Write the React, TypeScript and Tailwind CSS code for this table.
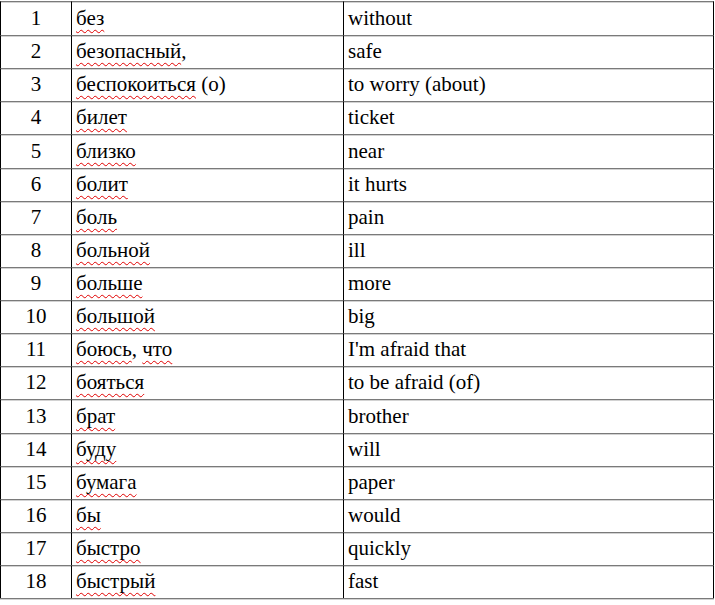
import React from "react";

type Row = { n: number; ru: React.ReactNode; en: string; tall?: boolean };

const W = ({ children }: { children: React.ReactNode }) => (
  <span className="underline decoration-wavy decoration-[#e00000] decoration-1 underline-offset-[4px] [text-decoration-skip-ink:none]">
    {children}
  </span>
);

const rows: Row[] = [
  { n: 1, ru: <W>без</W>, en: "without", tall: true },
  { n: 2, ru: <><W>безопасный</W>,</>, en: "safe" },
  { n: 3, ru: <><W>беспокоиться</W> (о)</>, en: "to worry (about)" },
  { n: 4, ru: <W>билет</W>, en: "ticket" },
  { n: 5, ru: <W>близко</W>, en: "near", tall: true },
  { n: 6, ru: <W>болит</W>, en: "it hurts" },
  { n: 7, ru: <W>боль</W>, en: "pain" },
  { n: 8, ru: <W>больной</W>, en: "ill" },
  { n: 9, ru: <W>больше</W>, en: "more" },
  { n: 10, ru: <W>большой</W>, en: "big" },
  { n: 11, ru: <><W>боюсь</W>, <W>что</W></>, en: "I'm afraid that" },
  { n: 12, ru: <W>бояться</W>, en: "to be afraid (of)" },
  { n: 13, ru: <W>брат</W>, en: "brother", tall: true },
  { n: 14, ru: <W>буду</W>, en: "will" },
  { n: 15, ru: <W>бумага</W>, en: "paper" },
  { n: 16, ru: <W>бы</W>, en: "would" },
  { n: 17, ru: <W>быстро</W>, en: "quickly" },
  { n: 18, ru: <W>быстрый</W>, en: "fast" },
];

const cell =
  "flex items-center border-l border-t border-l-black border-t-[#7a7a7a] shadow-[inset_0_1px_0_#d2d2d2]";

export default function App() {
  return (
    <div className="w-[715px] h-[605px] bg-white pt-[1px] font-['Liberation_Serif','Times_New_Roman',serif] text-[21px] text-black">
      <div className="flex flex-col w-[714px]">
        {rows.map((r) => (
          <div key={r.n} className={`flex ${r.tall ? "h-[34px]" : "h-[33px]"}`}>
            <div className={`${cell} w-[71px] justify-center`}>
              <span>{r.n}</span>
            </div>
            <div className={`${cell} w-[272px] pl-[4px]`}>
              <span className="whitespace-pre">{r.ru}</span>
            </div>
            <div className={`${cell} w-[371px] pl-[4px] border-r border-r-black`}>
              <span>{r.en}</span>
            </div>
          </div>
        ))}
        <div className="h-[2px] border-t border-t-[#7a7a7a] shadow-[inset_0_1px_0_#d2d2d2]" />
      </div>
    </div>
  );
}
